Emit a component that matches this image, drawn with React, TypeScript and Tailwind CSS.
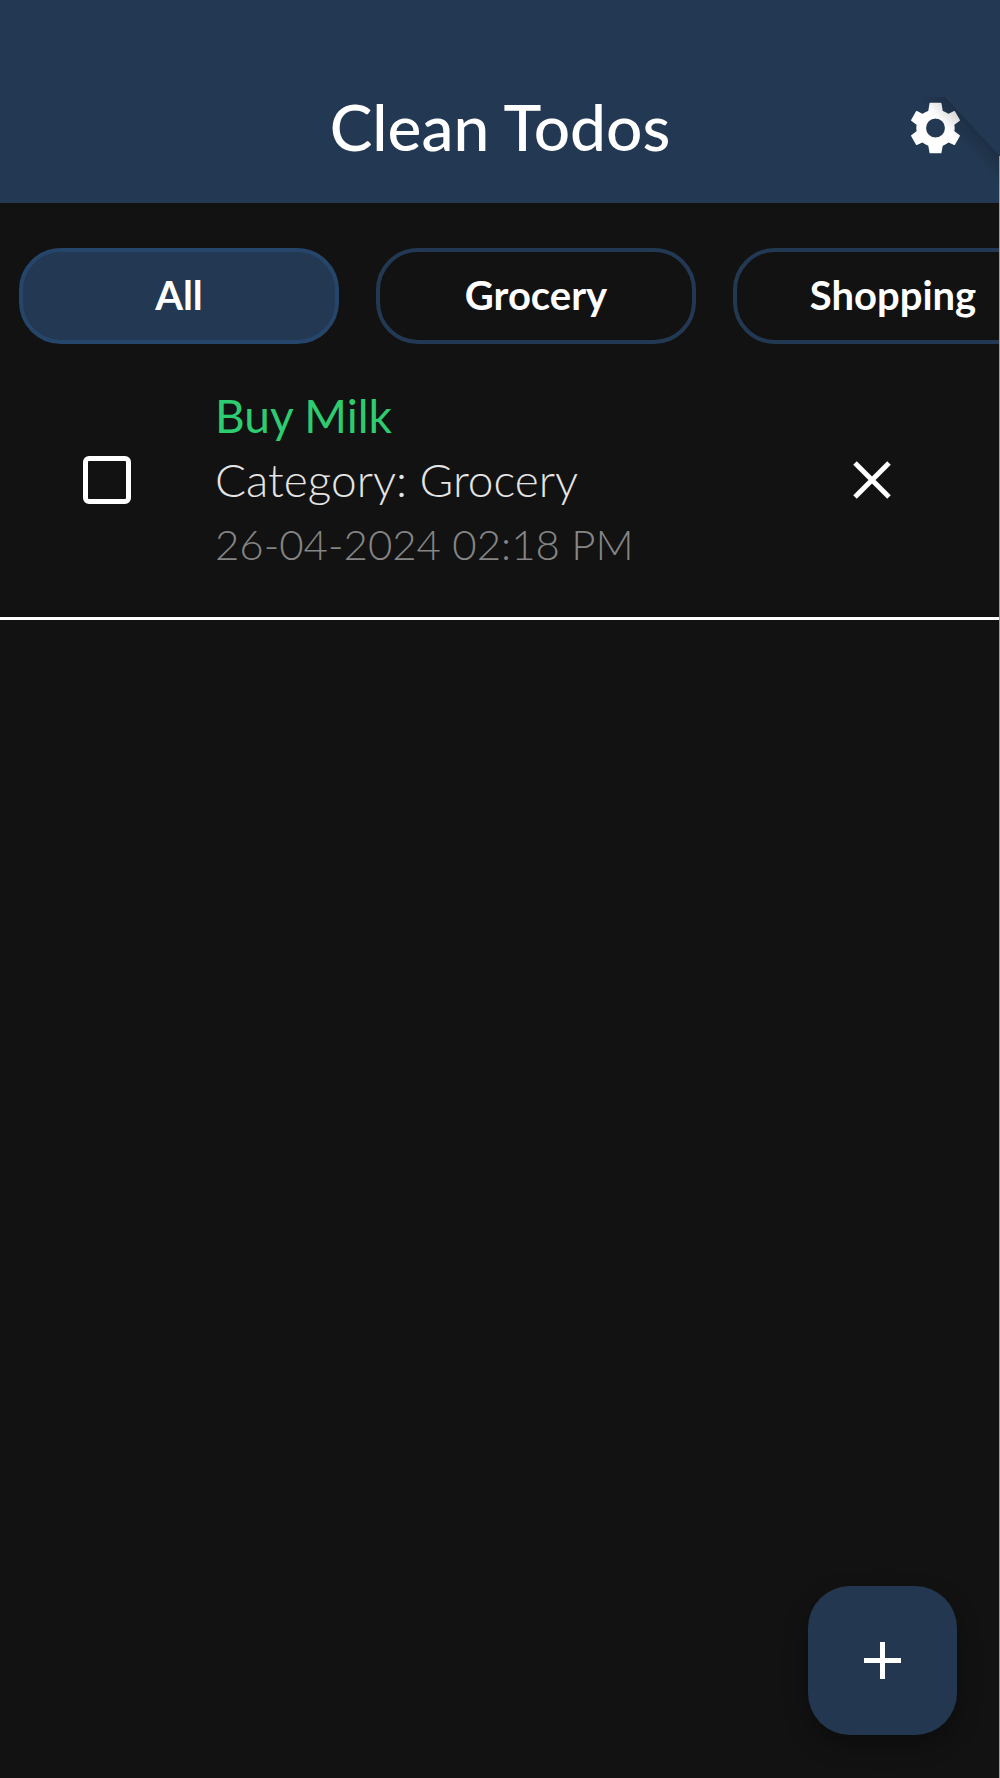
const categories = ["All", "Grocery", "Shopping"];

function GearIcon() {
  return (
    <svg className="h-[52px] w-[51px]" viewBox="0 0 152 157" aria-hidden="true">
      <path
        fill="currentColor"
        stroke="currentColor"
        strokeWidth="4"
        strokeLinejoin="round"
        fillRule="evenodd"
        d="M60 4H92L96 28Q106 32 115 38L133 29L148 55L131 68Q133 78 131 89L148 102L133 128L115 120Q106 127 96 131L92 153H60L56 131Q46 127 37 120L19 128L4 102L21 89Q19 78 21 68L4 55L19 29L37 38Q46 32 56 28ZM76 48A30.500 30.500 0 1 0 76 109A30.500 30.500 0 1 0 76 48Z"
      />
    </svg>
  );
}

export default function App() {
  return (
    <div className="relative flex min-h-screen flex-col overflow-x-hidden bg-[#121212] font-['Lato',sans-serif] text-white">
      <header className="relative grid h-[203px] shrink-0 grid-cols-[1fr_auto_1fr] items-end bg-[#233953] px-[39px] pb-10">
        <h1 className="col-start-2 text-[64px] leading-[72px] font-medium">Clean Todos</h1>
        <button type="button" aria-label="Settings" className="mb-[9px] justify-self-end">
          <GearIcon />
        </button>
        <svg
          className="pointer-events-none absolute top-[90px] right-0 h-[100px] w-[100px]"
          viewBox="0 0 100 100"
          aria-hidden="true"
        >
          <defs>
            <linearGradient id="fold" gradientUnits="userSpaceOnUse" x1="70" y1="34" x2="55" y2="48">
              <stop offset="0" stopColor="#000" stopOpacity="0.18" />
              <stop offset="1" stopColor="#000" stopOpacity="0" />
            </linearGradient>
          </defs>
          <path d="M5 7H45L100 66V100H78Z" fill="url(#fold)" />
        </svg>
      </header>

      <nav aria-label="Categories" className="mt-[45px] flex gap-[37px] overflow-hidden pl-[19px]">
        {categories.map((name, i) => (
          <button
            key={name}
            type="button"
            aria-pressed={i === 0}
            className={
              "h-24 w-80 shrink-0 rounded-[42px] border-4 pb-0.5 text-[40px] leading-none font-bold " +
              (i === 0 ? "border-[#26456a] bg-[#233953]" : "border-[#233953]")
            }
          >
            {name}
          </button>
        ))}
      </nav>

      <ul>
        <li className="flex items-center border-b-3 border-white px-[83px] pt-10 pb-[41px]">
          <input
            id="todo-1"
            type="checkbox"
            className="size-12 shrink-0 appearance-none rounded-md border-[5px] border-white checked:bg-white"
          />
          <label htmlFor="todo-1" className="ml-[84px] flex-1 leading-[64px]">
            <span className="block text-[46px] text-[#2ecc71]">Buy Milk</span>
            <span className="block text-[46px] font-light text-[#e4e4e4]">Category: Grocery</span>
            <span className="block text-[42px] font-light text-[#858585]">26-04-2024 02:18 PM</span>
          </label>
          <button type="button" aria-label="Delete Buy Milk" className="mr-[25px]">
            <svg className="size-10" viewBox="0 0 40 40" stroke="currentColor" strokeWidth="5" aria-hidden="true">
              <path d="M3 3 37 37M37 3 3 37" />
            </svg>
          </button>
        </li>
      </ul>

      <button
        type="button"
        aria-label="Add todo"
        className="absolute right-[43px] bottom-[43px] flex size-[149px] items-center justify-center rounded-[42px] bg-[#233850] shadow-[0_10px_24px_rgba(0,0,0,0.3)]"
      >
        <svg className="size-[37px]" viewBox="0 0 37 37" stroke="currentColor" strokeWidth="5" aria-hidden="true">
          <path d="M0 18.500H37M18.500 0V37" />
        </svg>
      </button>
      <div className="pointer-events-none absolute top-[156px] right-0 bottom-0 w-px bg-[#a0a0a0]" />
    </div>
  );
}
